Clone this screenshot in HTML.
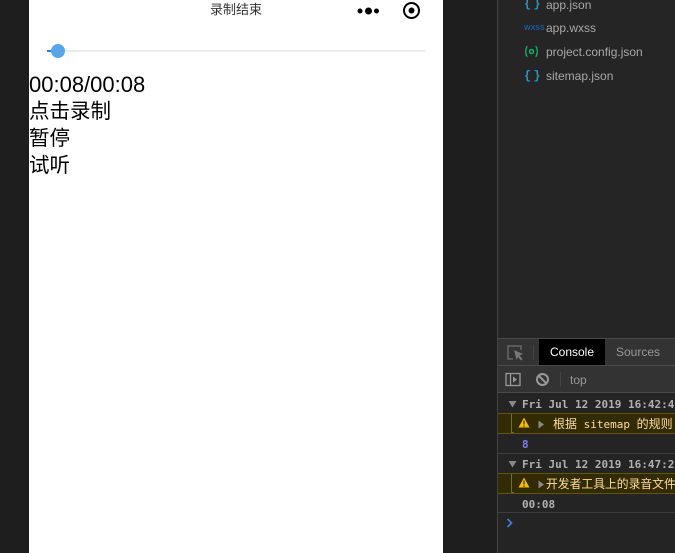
<!DOCTYPE html>
<html><head><meta charset="utf-8">
<style>
html,body{margin:0;padding:0;width:675px;height:553px;overflow:hidden;background:#1e1e1e}
*{box-sizing:border-box}
.a{position:absolute;white-space:nowrap}
.s{font-family:"Liberation Sans","Noto Sans CJK SC",sans-serif}
.m{font-family:"DejaVu Sans Mono","Noto Sans CJK SC",monospace;font-size:11px;font-weight:bold}
.f{font-size:12px;color:#a8a8a8;left:546px;font-family:"Liberation Sans",sans-serif;line-height:14px}
.l{left:29px;font-size:20.5px;line-height:27px;color:#000}
.b{left:524px;font:bold 12px "Liberation Mono",monospace;color:#1b9ad6;letter-spacing:-2.500px;line-height:14px}
.c{font-size:12px;font-weight:normal}
</style></head>
<body class="s">
<div class="a" style="left:29px;top:0;width:414px;height:553px;background:#fff"></div>
<div class="a" style="left:210px;top:2px;font-size:13px;line-height:16px;color:#333">录制结束</div>
<svg class="a" style="left:355px;top:0" width="70" height="22" viewBox="0 0 70 22">
<circle cx="5" cy="11" r="2.500" fill="#000"/><circle cx="13.500" cy="11" r="3.500" fill="#000"/><circle cx="21.500" cy="11" r="2.500" fill="#000"/>
<circle cx="56.500" cy="10.500" r="7.500" fill="none" stroke="#000" stroke-width="2"/><circle cx="56.500" cy="10.500" r="3" fill="#000"/>
</svg>
<div class="a" style="left:47px;top:50px;width:378px;height:2px;background:#ebebeb"></div>
<div class="a" style="left:47px;top:50px;width:11px;height:2px;background:#2a7fd0"></div>
<div class="a" style="left:51px;top:44px;width:14px;height:14px;border-radius:50%;background:#5aa5ea"></div>
<div class="a l" style="top:71px;font-size:22px">00:08/00:08</div>
<div class="a l" style="top:98px">点击录制</div>
<div class="a l" style="top:125px">暂停</div>
<div class="a l" style="top:152px">试听</div>

<div class="a" style="left:497px;top:0;width:178px;height:553px;background:#252525;border-left:1px solid #444"></div>
<div class="a b" style="top:-3px">{ }</div>
<div class="a f" style="top:-2px">app.json</div>
<div class="a" style="left:524px;top:24px;font:bold 7px 'Liberation Sans',sans-serif;line-height:9px;color:#1a5f9e">WXSS</div>
<div class="a f" style="top:21px">app.wxss</div>
<svg class="a" style="left:524px;top:45px" width="16" height="14" viewBox="0 0 16 14">
<path d="M3.500 1.500C1.500 1.500 2.500 6.500 1 6.500 2.500 6.500 1.500 11.500 3.500 11.500M11.500 1.500C13.500 1.500 12.500 6.500 14 6.500 12.500 6.500 13.500 11.500 11.500 11.500" fill="none" stroke="#0fae6b" stroke-width="1.400"/>
<circle cx="7.500" cy="6.500" r="2" fill="none" stroke="#0fae6b" stroke-width="1.500"/>
</svg>
<div class="a f" style="top:45px">project.config.json</div>
<div class="a b" style="top:69px">{ }</div>
<div class="a f" style="top:69px">sitemap.json</div>

<div class="a" style="left:498px;top:338px;width:177px;height:215px;background:#242424"></div>
<div class="a" style="left:498px;top:338px;width:177px;height:28px;background:#333;border-top:1px solid #4a4a4a;border-bottom:1px solid #4a4a4a"></div>
<svg class="a" style="left:507px;top:345px" width="18" height="16" viewBox="0 0 18 16">
<path d="M14 5V1H1v13h5" fill="none" stroke="#666" stroke-width="1.500"/><path d="M7 5l9 4-3.500 1.500L15.500 14l-1.500 1.500-3-3.500L9.500 15z" fill="#777"/>
</svg>
<div class="a" style="left:533px;top:345px;width:1px;height:15px;background:#444"></div>
<div class="a" style="left:539px;top:339px;width:66px;height:26px;background:#000;color:#fff;font-size:12px;line-height:26px;text-align:center">Console</div>
<div class="a" style="left:616px;top:339px;color:#999;font-size:12px;line-height:26px">Sources</div>
<div class="a" style="left:498px;top:366px;width:177px;height:27px;background:#333;border-bottom:1px solid #4a4a4a"></div>
<svg class="a" style="left:505px;top:372px" width="48" height="16" viewBox="0 0 48 16">
<rect x="1" y="1.500" width="14" height="12" fill="none" stroke="#999" stroke-width="1.300"/><path d="M5.500 2v11" stroke="#999" stroke-width="1.300"/><path d="M8 4.500l4 3-4 3z" fill="#999"/>
<circle cx="37.500" cy="7.500" r="5.500" fill="none" stroke="#999" stroke-width="2"/><path d="M33.500 3.500l8 8" stroke="#999" stroke-width="2"/>
</svg>
<div class="a" style="left:560px;top:372px;width:1px;height:15px;background:#444"></div>
<div class="a" style="left:570px;top:372px;color:#999;font-size:12px;line-height:16px">top</div>

<svg class="a" style="left:508px;top:400px" width="10" height="8"><path d="M0.500 1h8l-4 6.500z" fill="#888"/></svg>
<div class="a m" style="left:522px;top:398px;line-height:14px;color:#b0b0b0">Fri Jul 12 2019 16:42:42</div>
<div class="a" style="left:498px;top:413px;width:177px;height:21px;background:#332b00;border-top:1px solid #665500;border-bottom:1px solid #665500"></div>
<div class="a" style="left:511px;top:414px;width:1px;height:18px;background:#6a6a55"></div>
<div class="a" style="left:511px;top:432px;width:3px;height:1px;background:#6a6a55"></div>
<svg class="a" style="left:518px;top:417px" width="12" height="11"><path d="M6 0.500L11.500 10.500H0.500z" fill="#f5bd00"/><path d="M6 3.500v4M6 8.500v1.200" stroke="#333" stroke-width="1.200"/></svg>
<svg class="a" style="left:538px;top:420px" width="7" height="9"><path d="M0.500 0.500L6 4.500 0.500 8.500z" fill="#888"/></svg>
<div class="a m" style="left:553px;top:417px;line-height:14px;color:#ffdd9e;font-weight:normal"><span class="c">根据</span> sitemap <span class="c">的规则[</span></div>
<div class="a m" style="left:522px;top:438px;line-height:14px;color:#7d7dea">8</div>
<div class="a" style="left:498px;top:453px;width:177px;height:1px;background:#3c3c3c"></div>
<svg class="a" style="left:508px;top:460px" width="10" height="8"><path d="M0.500 1h8l-4 6.500z" fill="#888"/></svg>
<div class="a m" style="left:522px;top:458px;line-height:14px;color:#b0b0b0">Fri Jul 12 2019 16:47:29</div>
<div class="a" style="left:498px;top:473px;width:177px;height:21px;background:#332b00;border-top:1px solid #665500;border-bottom:1px solid #665500"></div>
<div class="a" style="left:511px;top:474px;width:1px;height:18px;background:#6a6a55"></div>
<div class="a" style="left:511px;top:492px;width:3px;height:1px;background:#6a6a55"></div>
<svg class="a" style="left:518px;top:477px" width="12" height="11"><path d="M6 0.500L11.500 10.500H0.500z" fill="#f5bd00"/><path d="M6 3.500v4M6 8.500v1.200" stroke="#333" stroke-width="1.200"/></svg>
<svg class="a" style="left:538px;top:480px" width="7" height="9"><path d="M0.500 0.500L6 4.500 0.500 8.500z" fill="#888"/></svg>
<div class="a" style="left:546px;top:476px;font-size:11.800px;line-height:15px;color:#ffdd9e;font-family:'Noto Sans CJK SC',sans-serif">开发者工具上的录音文件</div>
<div class="a m" style="left:522px;top:498px;line-height:14px;color:#b0b0b0">00:08</div>
<div class="a" style="left:498px;top:512px;width:177px;height:1px;background:#3c3c3c"></div>
<svg class="a" style="left:506px;top:518px" width="8" height="10"><path d="M1.500 1l4 4-4 4" fill="none" stroke="#3b82e0" stroke-width="1.600"/></svg>
</body></html>
